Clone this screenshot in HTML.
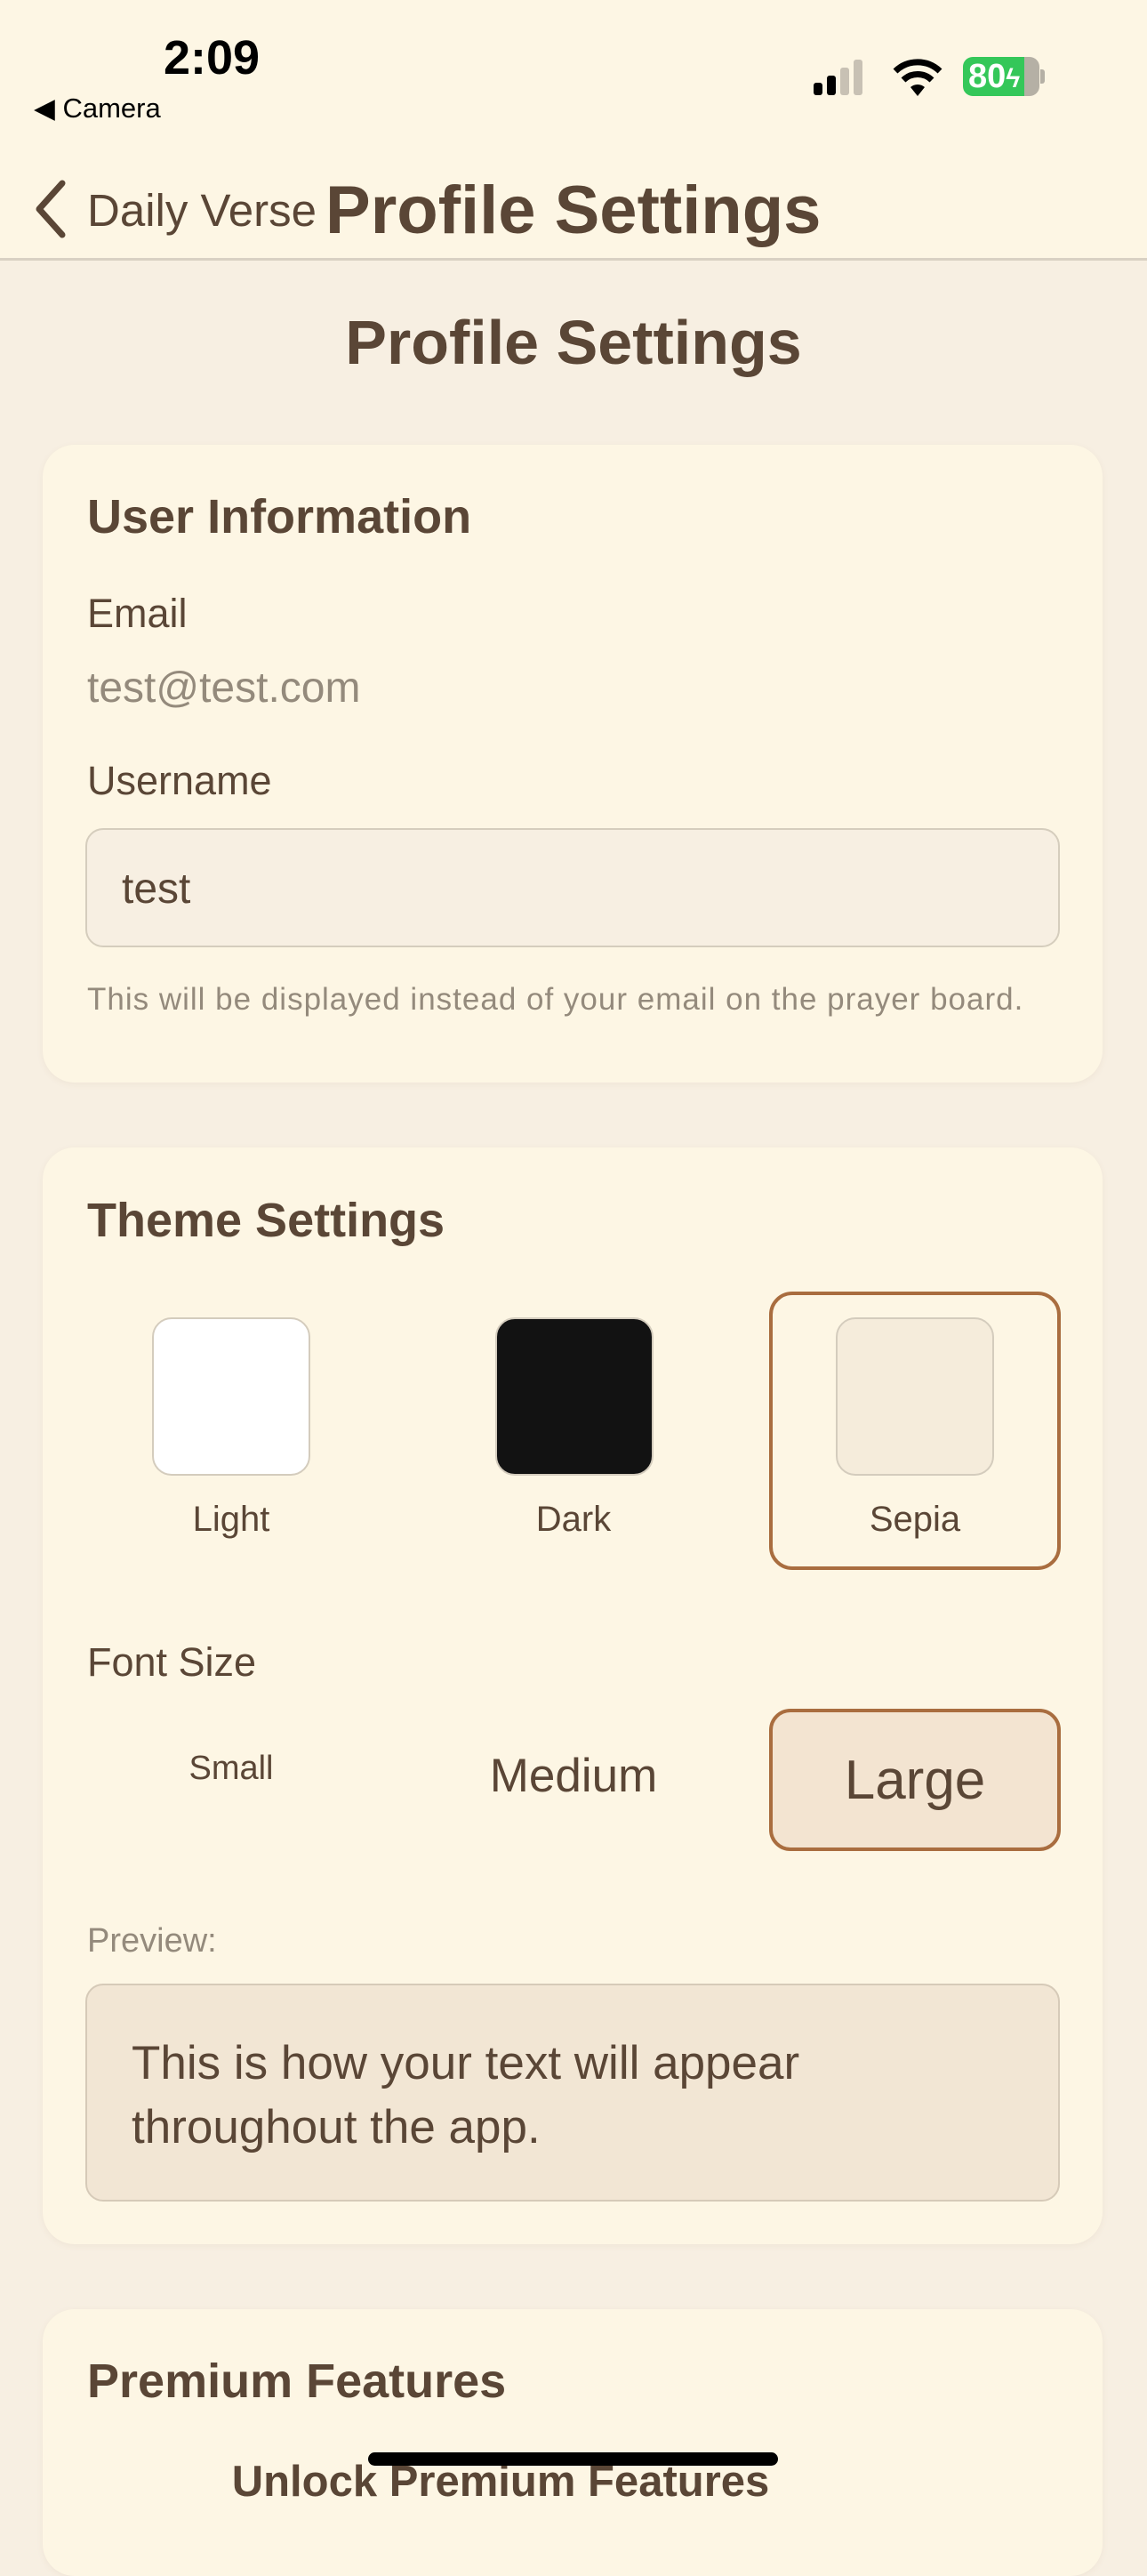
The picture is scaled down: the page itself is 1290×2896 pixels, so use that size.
<!DOCTYPE html>
<html><head><meta charset="utf-8">
<style>
*{margin:0;padding:0;box-sizing:border-box}
body{width:1290px;height:2796px;background:#f7efe2;font-family:"Liberation Sans",sans-serif;color:#5a4636;position:relative;overflow:hidden}
.a{position:absolute;white-space:nowrap}
.hdr{position:absolute;left:0;top:0;width:1290px;height:293px;background:#fdf6e4;border-bottom:3px solid #d9d1c3}
.card{position:absolute;left:48px;width:1192px;background:#fdf6e4;border-radius:36px;box-shadow:0 2px 8px rgba(120,90,50,.06)}
.b{font-weight:bold;color:#5a4636}
.sw{position:absolute;width:178px;height:178px;border-radius:22px;border:2px solid #d4ccbd}
.c{transform:translateX(-50%)}
</style></head><body>
<div class="hdr"></div>
<div class="a" style="left:184px;top:34px;font-size:54px;font-weight:bold;color:#000">2:09</div>
<div class="a" style="left:38px;top:104px;font-size:31px;color:#000">◀&#xFE0E; Camera</div>
<div class="a" style="left:915px;top:93px;width:10px;height:14px;background:#000;border-radius:3px"></div>
<div class="a" style="left:930px;top:85px;width:10px;height:22px;background:#000;border-radius:3px"></div>
<div class="a" style="left:945px;top:76px;width:10px;height:31px;background:#c8c1b4;border-radius:3px"></div>
<div class="a" style="left:960px;top:67px;width:10px;height:40px;background:#c8c1b4;border-radius:3px"></div>
<svg class="a" style="left:1002px;top:64px" width="60" height="44" viewBox="0 0 60 44"><path d="M30 44 L22 34 A12 12 0 0 1 38 34 Z" fill="#000"/><path d="M14 26 A23 23 0 0 1 46 26" stroke="#000" stroke-width="7" fill="none"/><path d="M5 16 A36 36 0 0 1 55 16" stroke="#000" stroke-width="7" fill="none"/></svg>
<div class="a" style="left:1083px;top:64px;width:86px;height:44px;border-radius:11px;background:linear-gradient(90deg,#34c759 0 80%,#b5b0a5 80%)"></div>
<div class="a" style="left:1170px;top:78px;width:5px;height:16px;background:#b5b0a5;border-radius:0 3px 3px 0"></div>
<div class="a" style="left:1089px;top:64px;font-size:38px;font-weight:bold;color:#fff;line-height:44px">80<span style="font-size:30px">ϟ</span></div>
<svg class="a" style="left:36px;top:202px" width="42" height="66" viewBox="0 0 42 66"><path d="M34 4 L8 33 L34 62" stroke="#5a4636" stroke-width="7" fill="none" stroke-linecap="round" stroke-linejoin="round"/></svg>
<div class="a" style="left:98px;top:207px;font-size:51px;color:#5a4636">Daily Verse</div>
<div class="a b" style="left:366px;top:193px;font-size:76px">Profile Settings</div>
<div class="a b c" style="left:645px;top:345px;font-size:70px">Profile Settings</div>

<div class="card" style="top:500px;height:717px"></div>
<div class="a b" style="left:98px;top:550px;font-size:54px">User Information</div>
<div class="a" style="left:98px;top:664px;font-size:45px">Email</div>
<div class="a" style="left:98px;top:746px;font-size:48px;color:#948a7c">test@test.com</div>
<div class="a" style="left:98px;top:852px;font-size:45px">Username</div>
<div class="a" style="left:96px;top:931px;width:1096px;height:134px;background:#f7efe2;border:2px solid #d5cdbd;border-radius:20px"></div>
<div class="a" style="left:137px;top:972px;font-size:48px">test</div>
<div class="a" style="left:98px;top:1104px;font-size:35px;letter-spacing:1px;color:#948a7c">This will be displayed instead of your email on the prayer board.</div>

<div class="card" style="top:1290px;height:1233px"></div>
<div class="a b" style="left:98px;top:1341px;font-size:54px">Theme Settings</div>
<div class="sw" style="left:171px;top:1481px;background:#fff"></div>
<div class="sw" style="left:557px;top:1481px;background:#121212"></div>
<div class="a" style="left:865px;top:1452px;width:328px;height:313px;border:4px solid #a96d3f;border-radius:26px"></div>
<div class="sw" style="left:940px;top:1481px;background:#f5ecdb"></div>
<div class="a c" style="left:260px;top:1686px;font-size:40px">Light</div>
<div class="a c" style="left:645px;top:1686px;font-size:40px">Dark</div>
<div class="a c" style="left:1029px;top:1686px;font-size:40px">Sepia</div>
<div class="a" style="left:98px;top:1843px;font-size:45px">Font Size</div>
<div class="a c" style="left:260px;top:1967px;font-size:38px">Small</div>
<div class="a c" style="left:645px;top:1966px;font-size:53px">Medium</div>
<div class="a" style="left:865px;top:1921px;width:328px;height:160px;border:4px solid #a96d3f;border-radius:24px;background:#f3e4d1"></div>
<div class="a c" style="left:1029px;top:1966px;font-size:62px">Large</div>
<div class="a" style="left:98px;top:2161px;font-size:38px;color:#948a7c">Preview:</div>
<div class="a" style="left:96px;top:2230px;width:1096px;height:245px;background:#f2e6d4;border:2px solid #d6cab8;border-radius:20px"></div>
<div class="a" style="left:148px;top:2284px;font-size:53px;line-height:72px;color:#5a4636">This is how your text will appear<br>throughout the app.</div>

<div class="card" style="top:2596px;height:300px"></div>
<div class="a b" style="left:98px;top:2646px;font-size:54px">Premium Features</div>
<div class="a b c" style="left:563px;top:2762px;font-size:49px">Unlock Premium Features</div>
<div class="a" style="left:414px;top:2757px;width:461px;height:15px;background:#000;border-radius:8px"></div>
</body></html>
